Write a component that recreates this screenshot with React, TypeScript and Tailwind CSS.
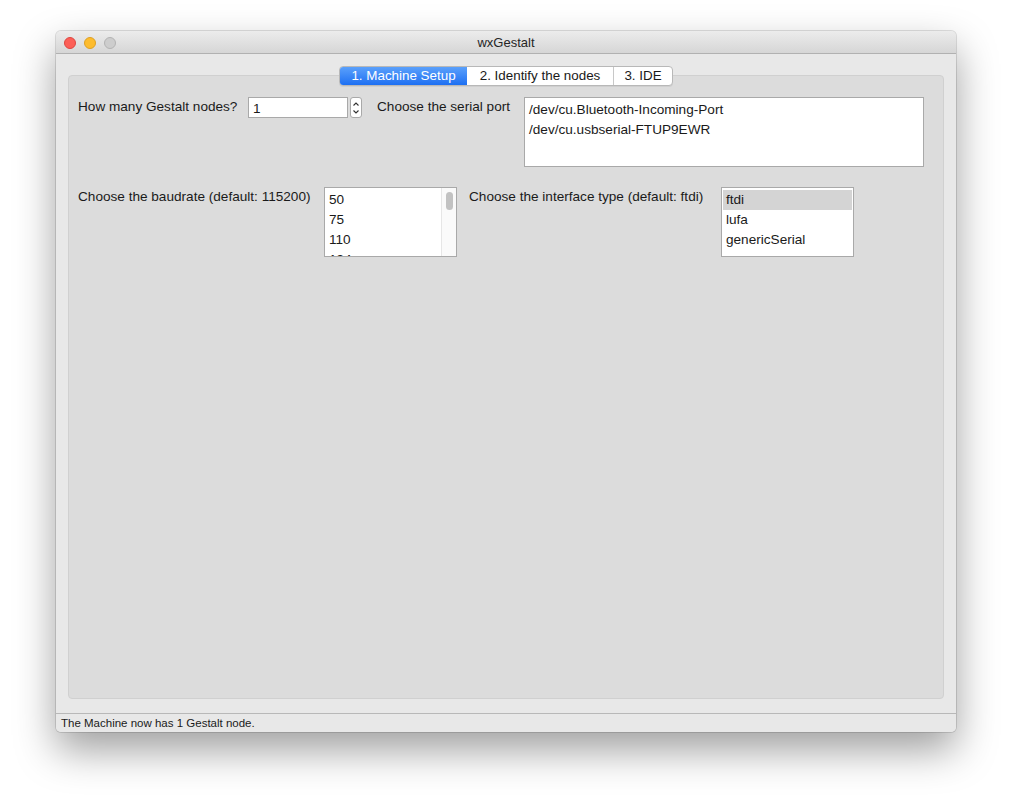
import React from 'react';

const font = { fontFamily: '"Liberation Sans", Arial, sans-serif' };

const ListBox: React.FC<{ items: string[]; selected?: number; className: string; scroll?: boolean }> = ({
  items,
  selected,
  className,
  scroll,
}) => (
  <div className={`relative overflow-hidden bg-white border border-[#a9a9a9] ${className}`}>
    <div className="flex flex-col pt-[2px] px-[1px]">
      {items.map((it, i) => (
        <div
          key={it}
          className={`h-[20px] leading-[20px] px-[3px] text-[13.6px] text-[#1a1a1a] ${i === selected ? 'bg-[#d4d4d4]' : ''}`}
        >
          {it}
        </div>
      ))}
    </div>
    {scroll && (
      <div className="absolute top-0 right-0 bottom-0 w-[15px] bg-[#fafafa] border-l border-[#e6e6e6]">
        <div className="mx-auto mt-[4px] w-[7px] h-[18px] rounded-full bg-[#c2c2c2]" />
      </div>
    )}
  </div>
);

export default function App() {
  return (
    <div className="w-[1012px] h-[812px] bg-white pt-[31px] pl-[56px]" style={font}>
      <div className="w-[900px] h-[701px] flex flex-col rounded-[5px] overflow-hidden bg-[#e8e8e8] shadow-[0_18px_40px_rgba(0,0,0,0.38),0_0_0_1px_rgba(0,0,0,0.12)]">
        {/* title bar */}
        <div className="relative h-[23px] shrink-0 flex items-center bg-gradient-to-b from-[#ececec] to-[#d6d6d6] border-b border-[#b1b1b1]">
          <div className="flex items-center gap-[8px] pl-[8px] pt-[1px]">
            <div className="w-[12px] h-[12px] rounded-full bg-[#fc5f57] border border-[#de4640]" />
            <div className="w-[12px] h-[12px] rounded-full bg-[#fdbc2e] border border-[#dea023]" />
            <div className="w-[12px] h-[12px] rounded-full bg-[#cdcdcd] border border-[#b3b3b3]" />
          </div>
          <div className="absolute inset-0 flex items-center justify-center pt-[1px] text-[13px] text-[#262626]">wxGestalt</div>
        </div>

        {/* body */}
        <div className="flex-1 flex flex-col px-[12px] pt-[12px] pb-[14px]">
          <div className="relative flex-1 flex flex-col">
            {/* tabs */}
            <div className="relative z-10 flex justify-center">
              <div className="flex h-[20px] rounded-[4px] border border-[#b8b8b8] bg-white text-[13.4px] overflow-hidden shadow-[0_1px_0_rgba(0,0,0,0.06)]">
                <div className="w-[127px] flex items-center justify-center text-white bg-gradient-to-b from-[#5aa0fb] to-[#1c6ff2]">
                  1. Machine Setup
                </div>
                <div className="w-[147px] flex items-center justify-center text-[#1a1a1a] border-r border-[#c8c8c8]">
                  2. Identify the nodes
                </div>
                <div className="w-[58px] flex items-center justify-center text-[#1a1a1a]">3. IDE</div>
              </div>
            </div>
            <div className="flex-1 -mt-[11px] rounded-[4px] bg-[#dcdcdc] border border-[#d0d0d0] flex flex-col px-[9px] pt-[21px] gap-[20px]">
              {/* row 1 */}
              <div className="flex items-start text-[13.6px] text-[#1a1a1a]">
                <div className="w-[170px] leading-[20px]">How many Gestalt nodes?</div>
                <div className="w-[100px] h-[21px] bg-white border border-[#a9a9a9] px-[4px] pt-[3px] leading-[16px]">1</div>
                <div className="ml-[2px] w-[12px] h-[21px] rounded-[3px] bg-white border border-[#a9a9a9] flex flex-col items-center justify-center">
                  <svg width="8" height="16" viewBox="0 0 8 16">
                    <path d="M1.5 5.5 L4 3 L6.5 5.5" fill="none" stroke="#333" strokeWidth="1.1" />
                    <path d="M1.5 10.5 L4 13 L6.5 10.5" fill="none" stroke="#333" strokeWidth="1.1" />
                  </svg>
                </div>
                <div className="ml-[15px] w-[147px] leading-[20px]">Choose the serial port</div>
                <ListBox
                  className="w-[400px] h-[70px]"
                  items={['/dev/cu.Bluetooth-Incoming-Port', '/dev/cu.usbserial-FTUP9EWR']}
                />
              </div>
              {/* row 2 */}
              <div className="flex items-start text-[13.6px] text-[#1a1a1a]">
                <div className="w-[246px] leading-[20px]">Choose the baudrate (default: 115200)</div>
                <ListBox className="w-[133px] h-[70px]" items={['50', '75', '110', '134']} scroll />
                <div className="ml-[12px] w-[252px] leading-[20px]">Choose the interface type (default: ftdi)</div>
                <ListBox className="w-[133px] h-[70px]" items={['ftdi', 'lufa', 'genericSerial']} selected={0} />
              </div>
            </div>
          </div>
        </div>

        {/* status bar */}
        <div className="h-[19px] shrink-0 border-t border-[#b8b8b8] bg-[#e8e8e8] flex items-center pl-[5px] pt-[1px] text-[11.5px] text-[#1a1a1a]">
          The Machine now has 1 Gestalt node.
        </div>
      </div>
    </div>
  );
}
